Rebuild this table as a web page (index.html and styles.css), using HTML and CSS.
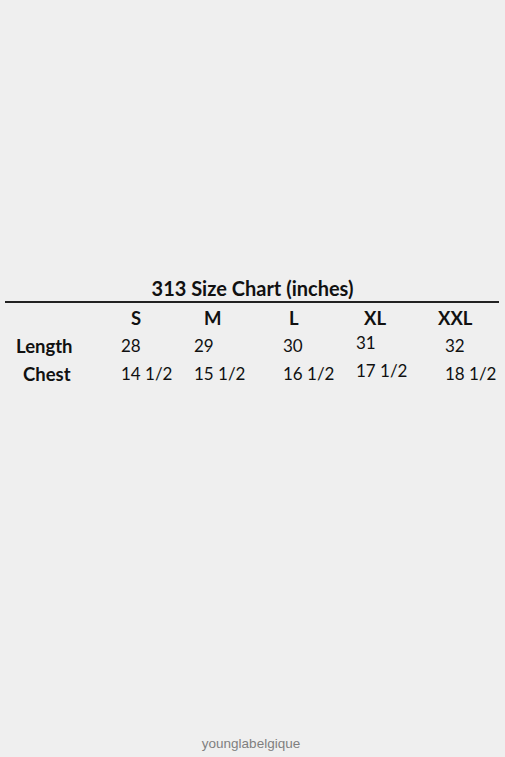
FILE: index.html
```html
<!DOCTYPE html>
<html>
<head>
<meta charset="utf-8">
<link rel="stylesheet" href="styles.css">
</head>
<body>
<div class="page">
  <div class="chart">
    <div class="title">313 Size Chart (inches)</div>
    <div class="rule"></div>
    <div class="grid">
      <div class="lbl"></div>
      <div class="hd h-s">S</div>
      <div class="hd h-m">M</div>
      <div class="hd h-l">L</div>
      <div class="hd h-xl">XL</div>
      <div class="hd h-xxl">XXL</div>

      <div class="lbl l-len">Length</div>
      <div class="val">28</div>
      <div class="val">29</div>
      <div class="val">30</div>
      <div class="val raise">31</div>
      <div class="val">32</div>

      <div class="lbl l-chest">Chest</div>
      <div class="val">14 1/2</div>
      <div class="val">15 1/2</div>
      <div class="val">16 1/2</div>
      <div class="val raise">17 1/2</div>
      <div class="val">18 1/2</div>
    </div>
  </div>
  <div class="footer">younglabelgique</div>
</div>
</body>
</html>
```
FILE: styles.css
```css
html, body {
  margin: 0;
  padding: 0;
  background: #efefef;
}
.page {
  width: 505px;
  height: 757px;
  display: flex;
  flex-direction: column;
  font-family: Lato, "Open Sans", sans-serif;
  color: #111;
}
.chart {
  padding-top: 276px;
}
.title {
  text-align: center;
  font-weight: bold;
  font-size: 20px;
  line-height: 24px;
}
.rule {
  margin: 1px 6px 0 5px;
  height: 1.5px;
  background: #222;
}
.grid {
  display: grid;
  grid-template-columns: 121px 73px 89px 73px 89px 60px;
  grid-auto-rows: 28px;
  font-size: 17px;
  line-height: 28px;
  margin-top: 1px;
}
.hd, .lbl {
  font-weight: bold;
  font-size: 18.5px;
}
.h-s { padding-left: 10px; }
.h-m { padding-left: 10px; }
.h-l { padding-left: 6px; }
.h-xl { padding-left: 8px; }
.h-xxl { margin-left: -7px; }
.l-len { padding-left: 16px; }
.l-chest { padding-left: 23px; }
.val { font-weight: normal; }
.raise { margin-top: -3px; }
.footer {
  margin-top: auto;
  margin-bottom: 6px;
  text-align: center;
  font-family: "Liberation Sans", Arial, sans-serif;
  font-size: 13.5px;
  color: #7f7f7f;
  padding-right: 3px;
}
```
